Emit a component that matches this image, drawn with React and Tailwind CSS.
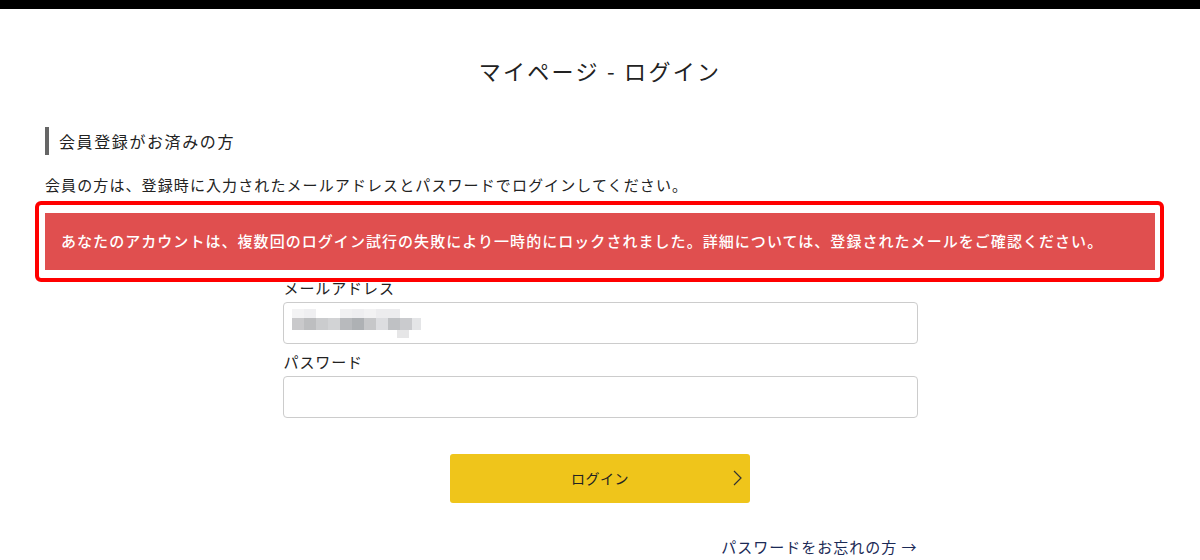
import React from "react";

const FONT = { fontFamily: '"Noto Sans CJK JP", "Noto Sans", sans-serif' };

function Mosaic() {
  const main = ["#c9c9cb", "#bdbec0", "#cbccce", "#d2d3d5", "#b8babd", "#aeb1b4", "#c6c7c9", "#dcdde0", "#bfc1c4", "#cacbce", "#e4e5e7"];
  return (
    <svg width="130" height="29" viewBox="0 0 130 29">
      <rect x="0" y="0" width="12" height="9" fill="#f3f3f4" />
      <rect x="12" y="0" width="12" height="9" fill="#efeff1" />
      <rect x="48" y="0" width="12" height="9" fill="#f1f1f2" />
      <rect x="60" y="0" width="12" height="9" fill="#eeeef0" />
      <rect x="72" y="0" width="12" height="9" fill="#f2f2f3" />
      <rect x="84" y="0" width="24" height="9" fill="#ececee" />
      {main.map((c, i) => (
        <rect key={i} x={i * 12} y="9" width={i === 10 ? 9 : 12} height="12" fill={c} />
      ))}
      <rect x="105" y="21" width="12" height="8" fill="#e6e6e7" />
    </svg>
  );
}

export default function App() {
  return (
    <div className="w-full min-h-[560px] bg-white text-[#222]" style={FONT}>
      <div className="h-[9px] bg-black" />
      <h1 className="pt-[45px] h-[79px] text-center text-[22px] leading-8 tracking-[2.3px] font-normal">
        マイページ - ログイン
      </h1>
      <div className="w-[1110px] mx-auto mt-[39px]">
        <h2 className="border-l-4 border-[#666] pl-[10px] h-[28px] leading-[28px] text-[16px] tracking-[1.6px] font-normal">
          会員登録がお済みの方
        </h2>
        <p className="mt-[18px] text-[15px] leading-6 tracking-[1.1px]">
          会員の方は、登録時に入力されたメールアドレスとパスワードでログインしてください。
        </p>
        <div className="relative mt-[16px]">
          <div className="h-[57px] bg-[#e04f4f] flex items-center px-4 text-white text-[15px] tracking-[1.05px] font-medium">
            あなたのアカウントは、複数回のログイン試行の失敗により一時的にロックされました。詳細については、登録されたメールをご確認ください。
          </div>
          <div className="pointer-events-none absolute -left-[10px] -right-[9px] -top-[12px] -bottom-[12px] border-4 border-[#ff0000] rounded-[6px]" />
        </div>
        <div className="w-[635px] mx-auto mt-2">
          <div className="pl-px h-6 leading-[20px] text-[15px] tracking-[0.9px]">メールアドレス</div>
          <div className="h-[42px] border border-[#cccccc] rounded-[4px] flex items-center pl-2">
            <Mosaic />
          </div>
          <div className="mt-2 pl-px h-6 leading-[20px] text-[15px] tracking-[0.9px]">パスワード</div>
          <div className="h-[42px] border border-[#cccccc] rounded-[4px]" />
          <div className="flex justify-center mt-[36px]">
            <button className="relative w-[300px] h-[49px] bg-[#efc51b] rounded-[3px] flex items-center justify-center text-[14px] tracking-[0.5px] text-[#222]" style={FONT}>
              ログイン
              <svg className="absolute right-[8px] top-[16px]" width="9" height="16" viewBox="0 0 9 16">
                <polyline points="1,1 8,8 1,15" fill="none" stroke="#333" strokeWidth="1.2" />
              </svg>
            </button>
          </div>
          <div className="mt-[32px] text-right h-6 leading-6 text-[15px] tracking-[1px] text-[#1b2a56]">
            パスワードをお忘れの方 →
          </div>
        </div>
      </div>
    </div>
  );
}
